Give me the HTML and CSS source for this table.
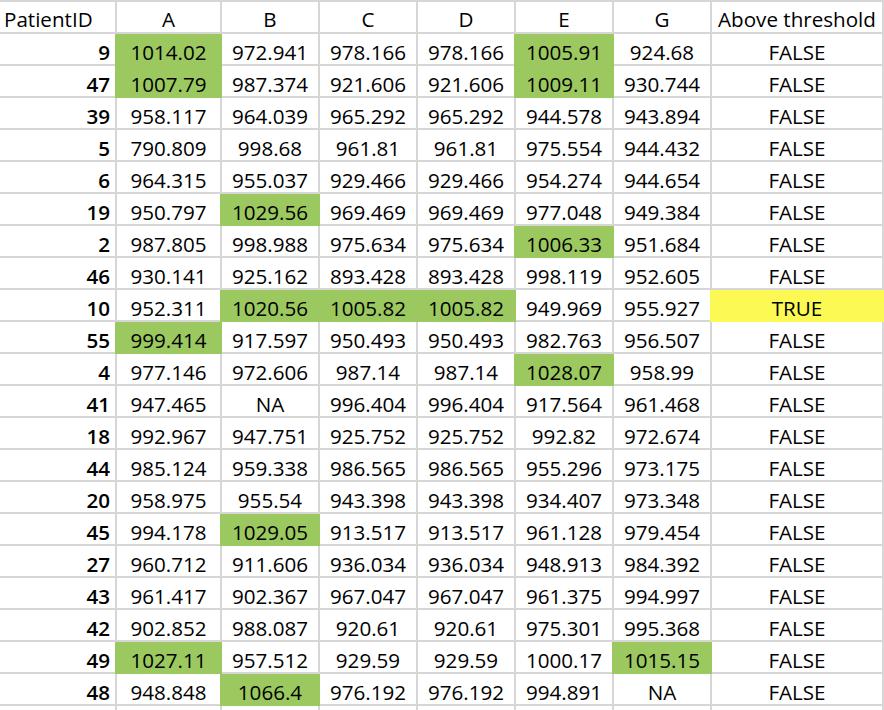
FILE: index.html
```html
<!DOCTYPE html>
<html lang="en">
<head>
<meta charset="utf-8">
<title>Patient data</title>
<link rel="stylesheet" href="styles.css">
</head>
<body>
<div class="sheet" id="sheet">
  <div class="cell head left">PatientID</div>
  <div class="cell head">A</div>
  <div class="cell head">B</div>
  <div class="cell head">C</div>
  <div class="cell head">D</div>
  <div class="cell head">E</div>
  <div class="cell head">G</div>
  <div class="cell head">Above threshold</div>
</div>
<script src="app.js"></script>
</body>
</html>
```
FILE: app.js
```js
const rows = [
  ["9","1014.02*","972.941","978.166","978.166","1005.91*","924.68","FALSE"],
  ["47","1007.79*","987.374","921.606","921.606","1009.11*","930.744","FALSE"],
  ["39","958.117","964.039","965.292","965.292","944.578","943.894","FALSE"],
  ["5","790.809","998.68","961.81","961.81","975.554","944.432","FALSE"],
  ["6","964.315","955.037","929.466","929.466","954.274","944.654","FALSE"],
  ["19","950.797","1029.56*","969.469","969.469","977.048","949.384","FALSE"],
  ["2","987.805","998.988","975.634","975.634","1006.33*","951.684","FALSE"],
  ["46","930.141","925.162","893.428","893.428","998.119","952.605","FALSE"],
  ["10","952.311","1020.56*","1005.82*","1005.82*","949.969","955.927","TRUE"],
  ["55","999.414*","917.597","950.493","950.493","982.763","956.507","FALSE"],
  ["4","977.146","972.606","987.14","987.14","1028.07*","958.99","FALSE"],
  ["41","947.465","NA","996.404","996.404","917.564","961.468","FALSE"],
  ["18","992.967","947.751","925.752","925.752","992.82","972.674","FALSE"],
  ["44","985.124","959.338","986.565","986.565","955.296","973.175","FALSE"],
  ["20","958.975","955.54","943.398","943.398","934.407","973.348","FALSE"],
  ["45","994.178","1029.05*","913.517","913.517","961.128","979.454","FALSE"],
  ["27","960.712","911.606","936.034","936.034","948.913","984.392","FALSE"],
  ["43","961.417","902.367","967.047","967.047","961.375","994.997","FALSE"],
  ["42","902.852","988.087","920.61","920.61","975.301","995.368","FALSE"],
  ["49","1027.11*","957.512","929.59","929.59","1000.17","1015.15*","FALSE"],
  ["48","948.848","1066.4*","976.192","976.192","994.891","NA","FALSE"],
  ["","","","","","","",""]
];
const sheet = document.getElementById("sheet");
rows.forEach(r => {
  r.forEach((v, i) => {
    const d = document.createElement("div");
    d.className = "cell";
    if (i === 0) d.classList.add("id");
    let t = v;
    if (t.endsWith("*")) { t = t.slice(0, -1); d.classList.add("green"); }
    if (t === "TRUE") d.classList.add("yellow");
    d.textContent = t;
    sheet.appendChild(d);
  });
});
```
FILE: styles.css
```css
html, body {
  margin: 0;
  padding: 0;
  background: #ffffff;
  overflow: hidden;
}
body {
  width: 884px;
  height: 710px;
  font-family: "Open Sans", "Noto Sans", sans-serif;
  font-size: 20.6px;
  color: #000;
}
.sheet {
  display: grid;
  grid-template-columns: 117px 105px 98px 98px 98px 98px 98px 172px;
  grid-auto-rows: 32px;
  border-top: 2px solid #d6d6d6;
  width: 884px;
}
.cell {
  box-sizing: border-box;
  border-right: 2px solid #d6d6d6;
  border-bottom: 2px solid #d6d6d6;
  display: flex;
  align-items: flex-end;
  justify-content: center;
  line-height: 22px;
  padding-bottom: 1px;
  white-space: nowrap;
}
.head {
  padding-bottom: 2px;
}
.head.left {
  justify-content: flex-start;
  padding-left: 4px;
}
.id {
  justify-content: flex-end;
  padding-right: 5px;
  font-weight: 600;
}
.green {
  background: #9bc95f;
  border-color: #9bc95f;
  box-shadow: -2px 0 0 #9bc95f;
}
.yellow {
  background: #fcf955;
  border-color: #fcf955;
  box-shadow: -2px 0 0 #fcf955;
}
```
